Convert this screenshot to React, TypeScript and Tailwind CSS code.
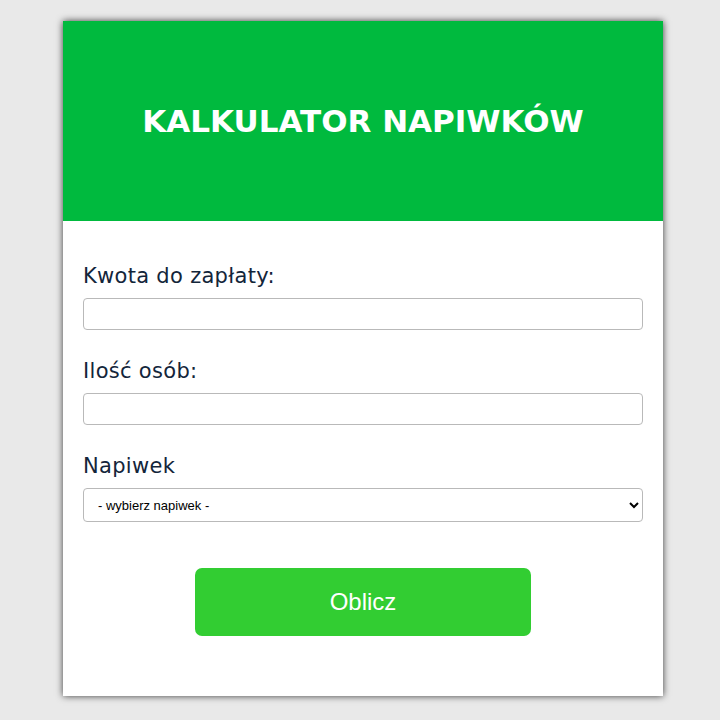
import React from "react";

export default function App() {
  const label = "block pt-[3px] text-[21px] leading-[24px] tracking-[0.3px] text-[#13253a] font-['DejaVu_Sans',sans-serif]";
  const input = "block w-full h-[32px] mt-[10px] border border-[#b9b9b9] rounded-[4px] bg-white px-2 text-[14px]";
  return (
    <div className="min-h-[720px] bg-[#e9e9e9] pt-[21px] pl-[6px] flex justify-center items-start">
      <div className="w-[600px] bg-white shadow-[0_0_7px_rgba(0,0,0,0.75)]">
        <div className="h-[200px] bg-[#00ba3e] flex items-center justify-center">
          <h1 className="text-white font-bold text-[31px] leading-[36px] font-['DejaVu_Sans',sans-serif]">KALKULATOR NAPIWKÓW</h1>
        </div>
        <div className="px-[20px] pt-[40px] pb-[60px]">
          <label className={label}>Kwota do zapłaty:</label>
          <input className={input} type="text" />
          <label className={label + " mt-[26px]"}>Ilość osób:</label>
          <input className={input} type="text" />
          <label className={label + " mt-[26px]"}>Napiwek</label>
          <select className="block w-full h-[34px] mt-[10px] border border-[#b9b9b9] rounded-[4px] bg-white pl-[10px] pr-[6px] text-[13px] text-black font-['Liberation_Sans',Arial,sans-serif]" defaultValue="">
            <option value="">- wybierz napiwek -</option>
          </select>
          <div className="flex justify-center mt-[46px]">
            <button className="w-[336px] h-[68px] rounded-[7px] bg-[#32cd32] text-white text-[24px] font-['Liberation_Sans',Arial,sans-serif]">Oblicz</button>
          </div>
        </div>
      </div>
    </div>
  );
}
